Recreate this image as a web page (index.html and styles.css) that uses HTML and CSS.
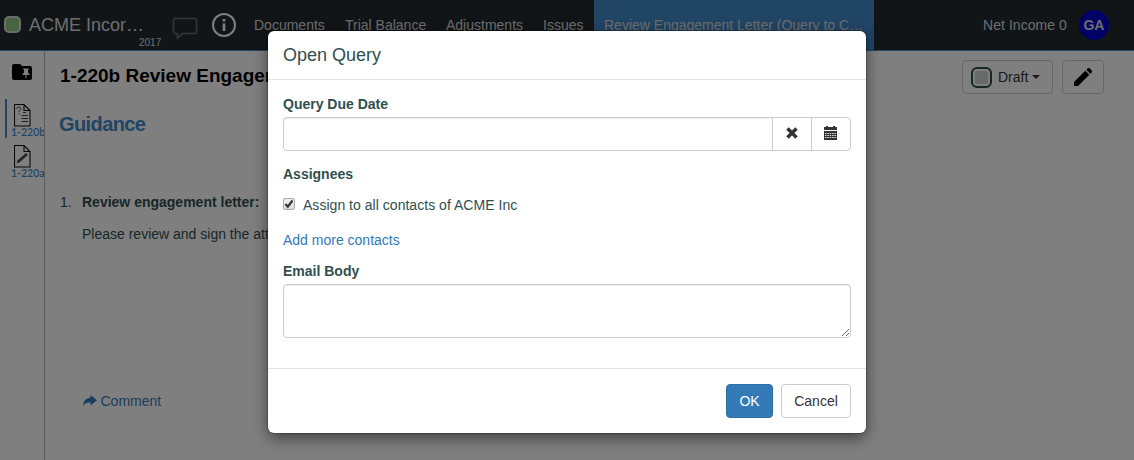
FILE: index.html
```html
<!DOCTYPE html>
<html lang="en">
<head>
<meta charset="utf-8">
<title>Open Query</title>
<link rel="stylesheet" href="styles.css">
</head>
<body>
<div class="app">
  <header class="topbar">
    <span class="entity-status"></span>
    <div class="entity">
      <span class="entity-name">ACME Incor…</span>
      <span class="entity-year">2017</span>
    </div>
    <svg class="chat-icon" width="26" height="24" viewBox="0 0 26 24" fill="none" stroke="#65696b" stroke-width="1.7"><path d="M3.500 1.500h19a2 2 0 0 1 2 2v11a2 2 0 0 1-2 2H10.500l-5 4.500v-4.500h-2a2 2 0 0 1-2-2v-11a2 2 0 0 1 2-2z"/></svg>
    <svg class="info-icon" width="26" height="26" viewBox="0 0 26 26"><circle cx="13" cy="13" r="11" fill="none" stroke="#fff" stroke-width="2"/><path d="M11.700 7h2.600v2.600h-2.600zM11.700 11.500h2.600v7.500h-2.600z" fill="#fff"/></svg>
    <nav class="nav">
      <a class="nav-item nav-documents">Documents</a>
      <a class="nav-item nav-trial">Trial Balance</a>
      <a class="nav-item nav-adjust">Adjustments</a>
      <a class="nav-item nav-issues">Issues</a>
      <a class="nav-item nav-active">Review Engagement Letter (Query to C…</a>
    </nav>
    <span class="net-income">Net Income 0</span>
    <span class="avatar">GA</span>
  </header>
  <div class="workspace">
    <aside class="sidebar">
      <svg class="folder-icon" width="20" height="17" viewBox="0 0 20 17"><path d="M2 0h6l2 2h8a2 2 0 0 1 2 2v10a2 2 0 0 1-2 2H2a2 2 0 0 1-2-2V2a2 2 0 0 1 2-2z"/><path d="M11 4.500h6v1h-1v3l1.500 1.500v1h-3v3l-.5.700-.5-.7v-3h-3v-1L12 8.500v-3h-1z" fill="#fff"/></svg>
      <div class="doc doc-current">
        <svg width="17" height="23" viewBox="0 0 17 23" fill="none" stroke="#111"><path d="M.5.500h9.500l6 6v15.500H.5zM10 .5v6h6" stroke-width="1.100"/><path d="M2.800 5c0-2.700 4-2.500 4-.2 0 1.700-2 1.700-2 3.200M4.800 9.300v1.200M9 8.500h3M7.500 11.500h6.500M7.500 14.500h6.500M7.500 17.500h6.500" stroke="#444"/></svg>
        <span class="doc-label">1-220b</span>
      </div>
      <div class="doc">
        <svg width="17" height="23" viewBox="0 0 17 23" fill="none" stroke="#111"><path d="M.5.500h9.500l6 6v15.500H.5zM10 .5v6h6" stroke-width="1.100"/><path d="M2.500 18.500l1.300-3.200 8.200-7.300 1.800 2-8.200 7.300z" fill="#444" stroke="none"/></svg>
        <span class="doc-label">1-220a</span>
      </div>
    </aside>
    <main class="document">
      <div class="doc-header">
        <h1 class="doc-title">1-220b Review Engagement Letter</h1>
        <div class="doc-actions">
          <div class="draft-btn">
            <span class="draft-state"></span>Draft<span class="caret"></span>
          </div>
          <div class="edit-btn"><svg width="20" height="20" viewBox="0 0 20 20"><path d="M1 15L12.300 3.700l4 4L5 19H1zM13.300 2.700l1.500-1.500q.9-.9 1.800 0l2.200 2.200q.9.900 0 1.800l-1.500 1.500z"/></svg></div>
        </div>
      </div>
      <h2 class="guidance">Guidance</h2>
      <div class="procedure">
        <span class="number">1.</span>
        <div class="procedure-text">
          <p class="procedure-title">Review engagement letter:</p>
          <p class="procedure-desc">Please review and sign the att</p>
        </div>
      </div>
      <a class="comment"><svg width="14" height="12" viewBox="0 0 14 12"><path d="M7.500 0L14 5.200l-6.500 5.300V7.600C4 7.400 2 8.200.3 11 0 6 3 3 7.500 2.700z" fill="#337ab7"/></svg>Comment</a>
    </main>
  </div>
</div>
<div class="backdrop">
  <section class="modal">
    <div class="modal-header">Open Query</div>
    <div class="modal-body">
      <label class="field-label">Query Due Date</label>
      <div class="date-group">
        <div class="date-input"></div>
        <div class="addon"><svg class="clear-icon" width="12" height="12" viewBox="0 0 12 12"><path d="M1.500 1.500l9 9M10.500 1.500l-9 9" stroke="#333" stroke-width="3.500"/></svg></div>
        <div class="addon"><svg class="calendar-icon" width="13" height="14" viewBox="0 0 13 14"><path d="M0 1h2V0h2v1h5V0h2v1h2v3H0zM0 5h13v9H0z" fill="#333"/><path d="M1 7.500h11M1 9.500h11M1 11.500h11" stroke="#fff" stroke-width=".8" stroke-dasharray="1.600 .75"/></svg></div>
      </div>
      <label class="field-label label-assignees">Assignees</label>
      <div class="check-row">
        <span class="checkbox"><svg width="10" height="10" viewBox="0 0 10 10"><path d="M1.500 5l2.300 2.700L8.500 1.500" fill="none" stroke="#333" stroke-width="2.100"/></svg></span>
        <span class="check-text">Assign to all contacts of ACME Inc</span>
      </div>
      <a class="add-link">Add more contacts</a>
      <label class="field-label label-email">Email Body</label>
      <textarea class="email-body"></textarea>
    </div>
    <div class="modal-footer">
      <button class="btn btn-primary">OK</button>
      <button class="btn btn-cancel">Cancel</button>
    </div>
  </section>
</div>
</body>
</html>
```
FILE: styles.css
```css
* { box-sizing: border-box; }
body { margin: 0; font: 14px/20px "Liberation Sans", Arial, sans-serif; color: #2f4f4f; overflow: hidden; }
h1, h2, p { margin: 0; }
svg { display: block; flex: none; }
a { color: #337ab7; }

.app { height: 460px; background: #fff; }
.topbar { height: 51px; display: flex; align-items: flex-start; background: #242b30; border-bottom: 1px solid #428bca; color: #ddd; white-space: nowrap; }
.entity-status { width: 17px; height: 17px; margin: 16px 8px 0 4px; border: 2px solid #d8dcd8; border-radius: 5px; background: #90ca86; flex: none; }
.entity { width: 133px; height: 50px; padding-top: 13px; display: flex; flex-direction: column; }
.entity-name { font-size: 18px; line-height: 24px; }
.entity-year { font-size: 10px; line-height: 12px; padding-left: 110px; }
.chat-icon { margin: 17px 0 0 10px; }
.info-icon { margin: 12px 0 0 13px; }
.nav { display: flex; height: 51px; margin-left: 17px; }
.nav-item { padding-top: 15px; color: #ddd; }
.nav-documents { width: 91px; }
.nav-trial { width: 101px; }
.nav-adjust { width: 97px; }
.nav-issues { width: 51px; }
.nav-active { width: 280px; padding-left: 10px; background: #428bca; }
.net-income { margin: 15px 0 0 109px; letter-spacing: .05px; }
.avatar { width: 30px; height: 30px; margin: 10px 0 0 12px; border-radius: 50%; background: #0000d0; font-weight: bold; line-height: 30px; text-align: center; }

.workspace { display: flex; height: 409px; }
.sidebar { width: 45px; border-right: 1px solid #bbb; overflow: hidden; flex: none; }
.folder-icon { margin: 13px 0 0 12px; }
.doc { height: 39px; margin-left: 5px; padding: 5px 0 0 9px; }
.doc + .doc { margin-top: 2px; }
.doc-current { margin-top: 18px; padding-left: 7px; border-left: 2px solid #428bca; }
.doc-label { display: block; margin: -1px 0 0 -3px; font: 600 10.5px/12px Lato, sans-serif; color: #428bca; white-space: nowrap; }
.document { flex: 1; padding: 9px 30px 0 14px; }
.doc-header { display: flex; justify-content: space-between; height: 34px; }
.doc-title { font-size: 19px; line-height: 31px; color: #000; padding-left: 1px; }
.doc-actions { display: flex; gap: 9px; }
.draft-btn, .edit-btn { height: 34px; display: flex; align-items: center; border: 1px solid #ccc; border-radius: 4px; color: #333; }
.draft-btn { width: 91px; padding-left: 8px; }
.draft-state { width: 21px; height: 21px; margin-right: 6px; border: 2px solid #2f4f4f; border-radius: 6px; background: #d3d3d3; box-shadow: inset 0 0 0 2px #fff; }
.caret { margin-left: 4px; border: 4px solid transparent; border-top-color: #333; border-bottom: 0; }
.edit-btn { width: 42px; padding-left: 10px; }
.guidance { margin-top: 18px; font-size: 20px; line-height: 24px; letter-spacing: -.6px; color: #428bca; }
.procedure { display: flex; margin-top: 56px; }
.number { width: 23px; padding-left: 1px; }
.procedure-text { white-space: nowrap; }
.procedure-title { font-weight: bold; }
.procedure-desc { margin-top: 12px; }
.comment { display: flex; align-items: center; gap: 3.5px; margin: 147px 0 0 24px; }

.backdrop { position: absolute; inset: 0; background: rgba(0, 0, 0, .5); display: flex; justify-content: center; align-items: flex-start; padding-top: 31px; }
.modal { width: 598px; height: 402px; background: #fff; border-radius: 6px; box-shadow: 0 0 0 1px rgba(0, 0, 0, .2), 0 5px 15px rgba(0, 0, 0, .5); }
.modal-header { height: 49px; padding: 12px 15px; font-size: 18px; line-height: 24px; border-bottom: 1px solid #e5e5e5; }
.modal-body { height: 288px; padding: 14px 15px 0; display: flex; flex-direction: column; align-items: stretch; }
.field-label { font-weight: bold; }
.date-group { display: flex; height: 34px; margin-top: 3px; border: 1px solid #ccc; border-radius: 4px; }
.date-input { flex: 1; box-shadow: inset 0 1px 1px rgba(0, 0, 0, .075); }
.addon { width: 39px; display: flex; align-items: center; justify-content: center; border-left: 1px solid #ccc; }
.clear-icon { margin-top: -2px; }
.calendar-icon { margin: -2px 1px 0 0; }
.label-assignees { margin-top: 13px; }
.check-row { display: flex; align-items: center; margin-top: 11px; }
.checkbox { width: 12px; height: 12px; margin: -2px 8px 0 0; border: 1px solid #aaa; border-radius: 2px; background: linear-gradient(#eee, #ddd); }
.check-text { letter-spacing: .03px; }
.add-link { margin-top: 15px; }
.label-email { margin-top: 11px; }
.email-body { height: 54px; margin-top: 3px; border: 1px solid #ccc; border-radius: 4px; resize: vertical; box-shadow: inset 0 1px 1px rgba(0, 0, 0, .075); }
.modal-footer { height: 65px; display: flex; justify-content: flex-end; gap: 8px; padding: 15px; border-top: 1px solid #e5e5e5; }
.btn { height: 34px; font: inherit; padding: 0; border: 1px solid #ccc; border-radius: 4px; background: #fff; color: #333; }
.btn-primary { width: 47px; background: #337ab7; border-color: #2e6da4; color: #fff; }
.btn-cancel { width: 70px; }
```
